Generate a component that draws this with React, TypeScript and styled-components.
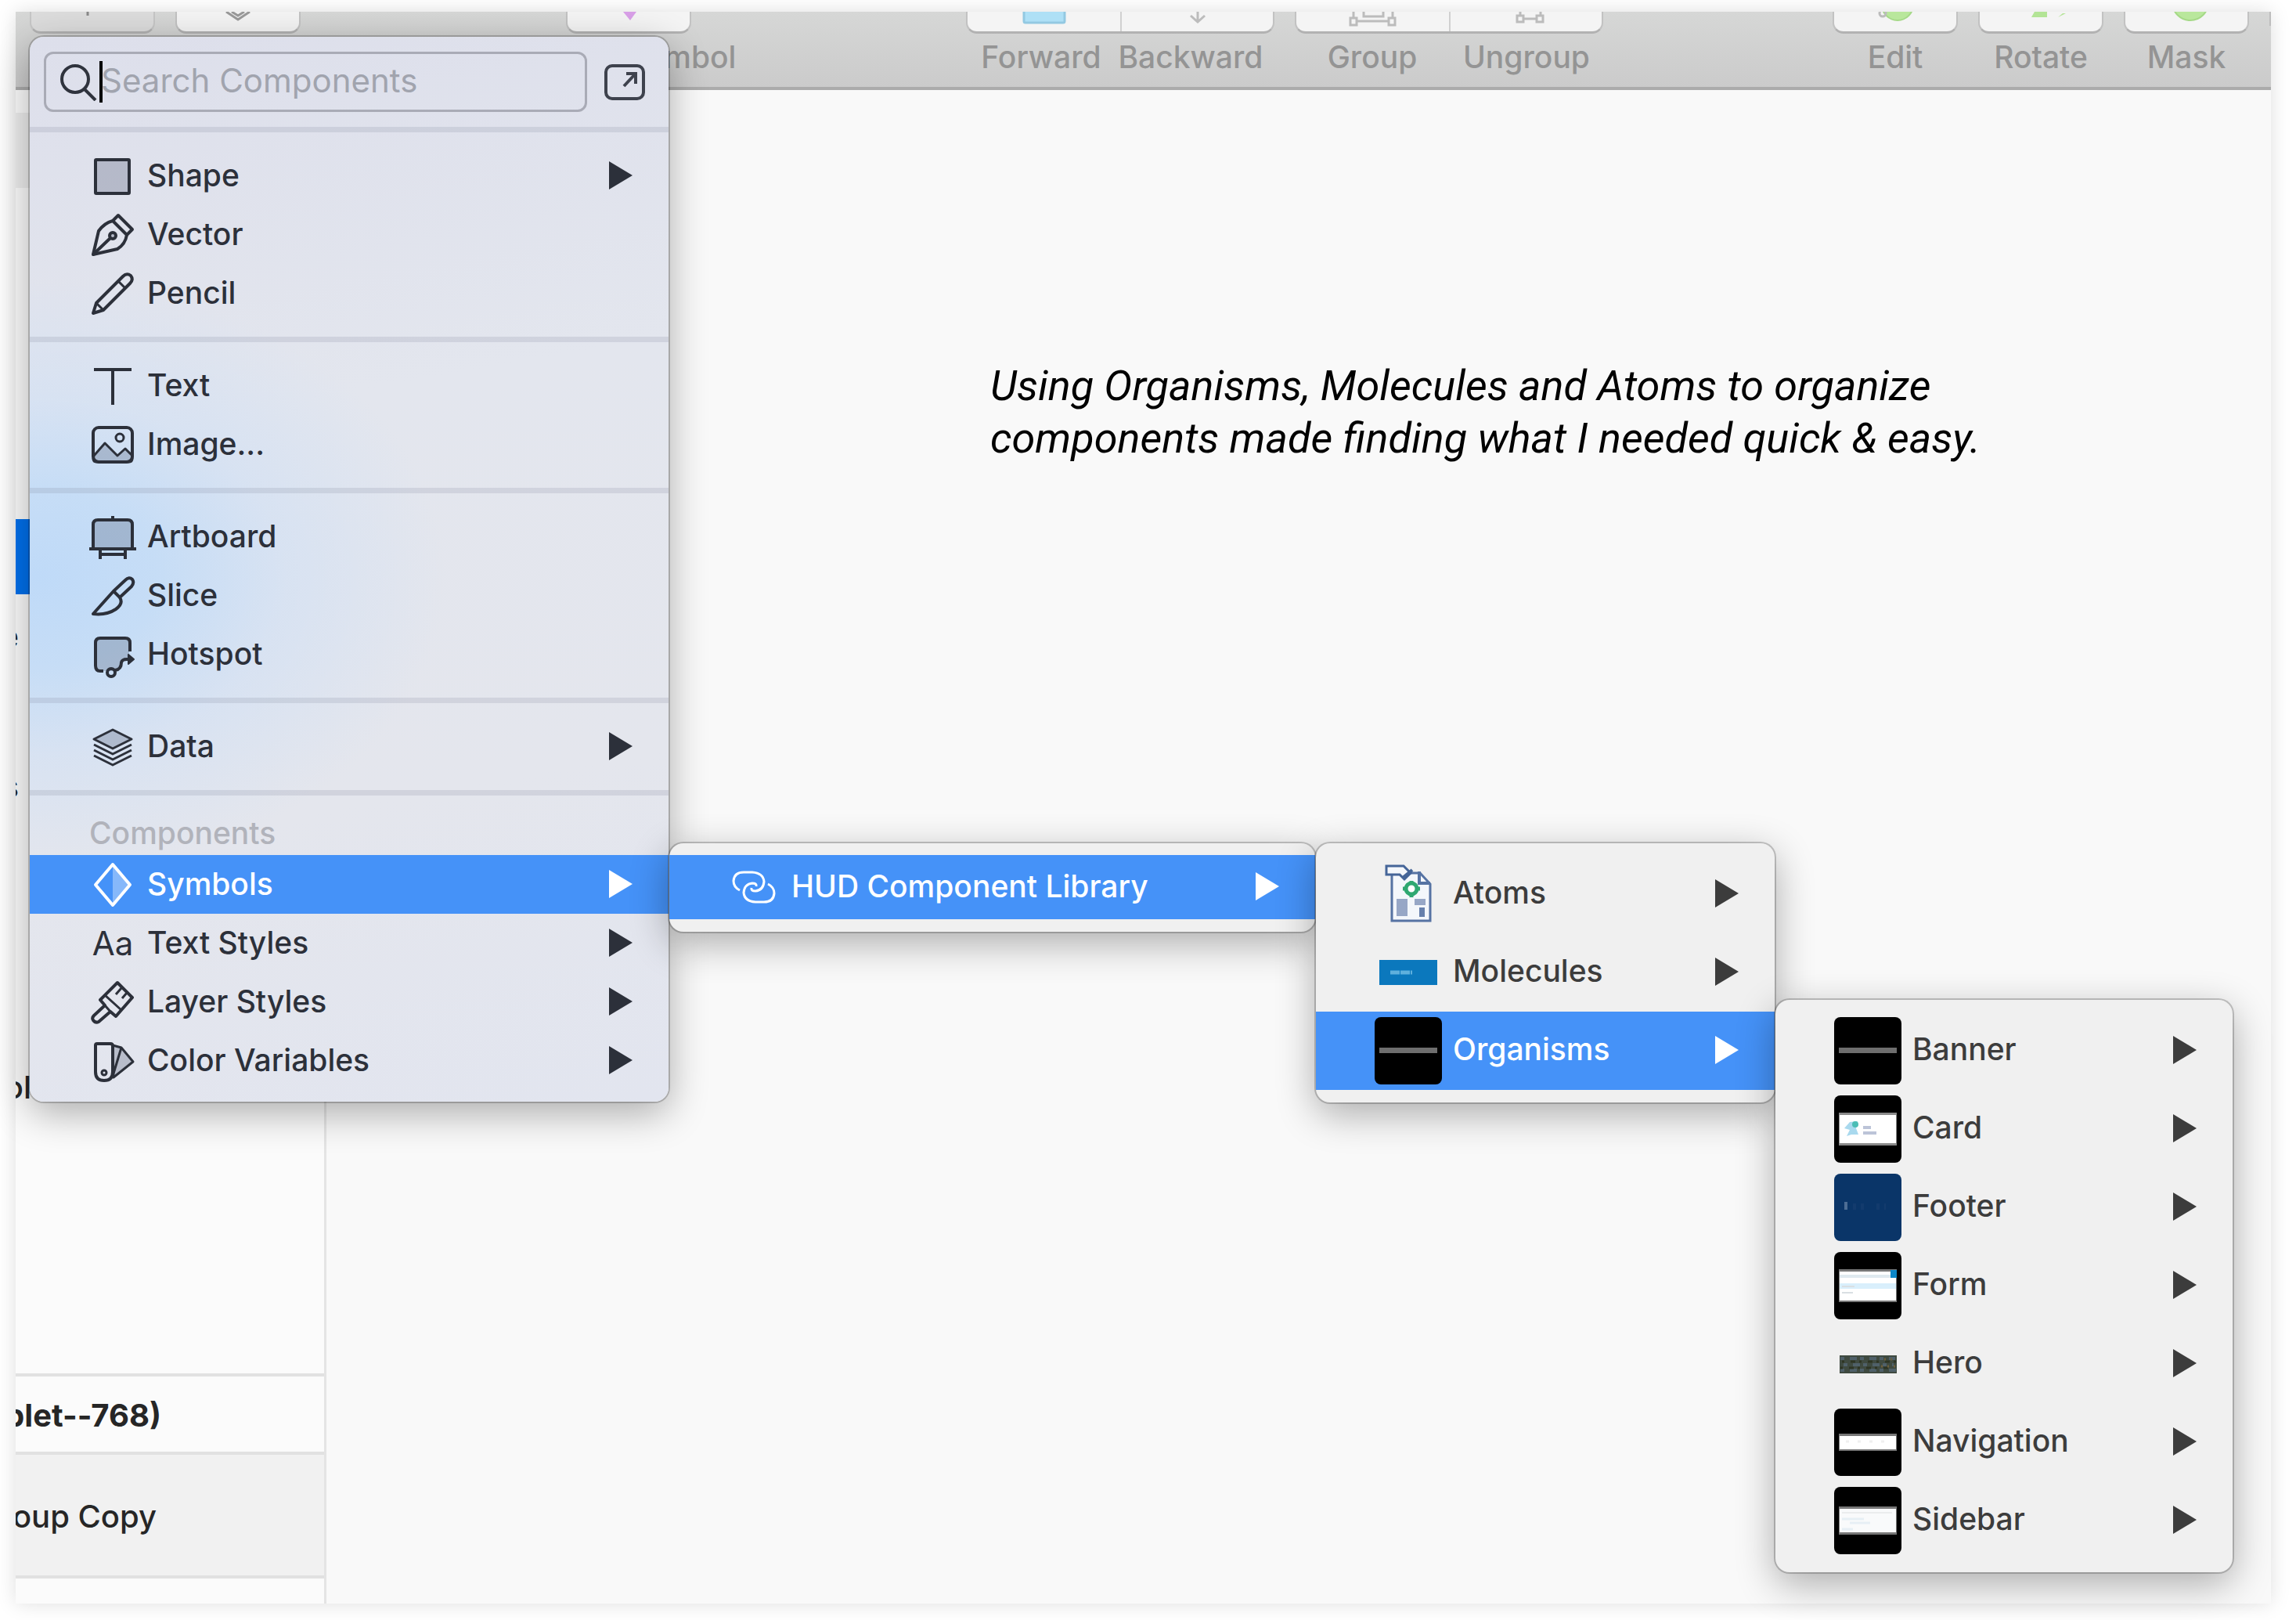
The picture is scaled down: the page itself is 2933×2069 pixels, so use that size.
import React from "react";
import styled, { createGlobalStyle, css } from "styled-components";

const GlobalStyle = createGlobalStyle`
  * { box-sizing: border-box; }
  body {
    margin: 0;
    background: #fff;
    font-family: Inter, "Liberation Sans", sans-serif;
    color: #2c303a;
  }
  button, input { font: inherit; color: inherit; }
`;

/* ---------- page ---------- */

const Page = styled.div`
  min-height: 100vh;
  padding: 15px 32px 21px 20px;
  display: flex;
  overflow: hidden;
`;

const Window = styled.main`
  position: relative;
  flex: 1;
  min-width: 0;
  display: flex;
  flex-direction: column;
  background: #f9f9f9;
  box-shadow: 0 0 24px rgba(0, 0, 0, 0.13);
`;

const Clip = styled.div`
  flex: 1;
  min-width: 0;
  overflow: hidden;
  display: flex;
  flex-direction: column;
`;

/* ---------- toolbar ---------- */

const Toolbar = styled.header`
  display: flex;
  align-items: flex-start;
  height: 100px;
  padding-left: 18px;
  background: linear-gradient(#d6d7d6, #cbcbcb);
  border-bottom: 4px solid #ababab;
`;

const Spacer = styled.div<{ $grow: number }>`
  flex: ${(p) => p.$grow} 1 0;
`;

const Tool = styled.div`
  display: flex;
  flex-direction: column;
  align-items: center;
  margin-right: 26px;
`;

const ToolButtons = styled.div<{ $dim?: boolean }>`
  display: flex;
  height: 28px;
  background: ${(p) => (p.$dim ? "#dcdcdc" : "#f4f4f4")};
  border: 2px solid ${(p) => (p.$dim ? "#c6c6c6" : "#c2c2c2")};
  border-top: 0;
  border-bottom: 3px solid #b2b2b2;
  border-radius: 0 0 14px 14px;
`;

const ToolButton = styled.button<{ $wide?: boolean }>`
  width: ${(p) => (p.$wide ? 195 : 156)}px;
  height: 25px;
  padding: 0;
  border: 0;
  background: none;
  display: flex;
  justify-content: center;
  & + & {
    border-left: 2px solid #d0d0d0;
  }
`;

const ToolLabels = styled.div<{ $inset?: number }>`
  display: flex;
  justify-content: space-around;
  align-self: stretch;
  padding-top: 6px;
  padding-right: ${(p) => p.$inset || 0}px;
  font-size: 39px;
  line-height: 48px;
  font-weight: 500;
  color: #949494;
  white-space: nowrap;
`;

const ToolLabel = styled.span`
  width: 0;
  display: flex;
  justify-content: center;
`;

const ToolEdge = styled.div`
  width: 2px;
  height: 18px;
  background: #bdbdbd;
`;

/* ---------- sidebar ---------- */

const Workspace = styled.div`
  flex: 1;
  display: flex;
`;

const Sidebar = styled.aside`
  width: 397px;
  flex: none;
  display: flex;
  flex-direction: column;
  background: #fbfbfb;
  border-right: 3px solid #e4e4e4;
  font-size: 40px;
  font-weight: 500;
  line-height: 48px;
  color: #262626;
`;

const SideGap = styled.div<{ $h: number; $tint?: boolean }>`
  height: ${(p) => p.$h}px;
  background: ${(p) => (p.$tint ? "#ededed" : "transparent")};
`;

const SideRow = styled.div<{ $active?: boolean }>`
  height: 96px;
  padding-top: 12px;
  display: flex;
  align-items: center;
  background: ${(p) => (p.$active ? "#0070ec" : "transparent")};
`;

const SideSection = styled.div<{ $h: number; $bold?: boolean; $tint?: boolean }>`
  height: ${(p) => p.$h}px;
  padding-top: 4px;
  display: flex;
  align-items: center;
  border-top: 4px solid #e1e1e1;
  background: ${(p) => (p.$tint ? "#f1f1f1" : "transparent")};
  font-weight: ${(p) => (p.$bold ? 700 : 500)};
`;

const TailLabel = styled.span<{ $end: number }>`
  width: ${(p) => p.$end}px;
  display: flex;
  justify-content: flex-end;
  white-space: pre;
`;

const Canvas = styled.section`
  flex: 1;
  min-width: 0;
  padding: 344px 0 0 848px;
`;

const Note = styled.p`
  margin: 0;
  font-family: Roboto, sans-serif;
  font-style: italic;
  font-weight: 400;
  font-size: 54px;
  line-height: 67px;
  color: #000;
  white-space: nowrap;
`;

/* ---------- menus ---------- */

const surface = css`
  border-radius: 18px;
  box-shadow: 0 0 0 2px rgba(0, 0, 0, 0.2), 0 14px 50px rgba(0, 0, 0, 0.32);
`;

const MainMenu = styled.nav`
  ${surface}
  position: absolute;
  left: 18px;
  top: 32px;
  width: 816px;
  padding-bottom: 15px;
  background:
    radial-gradient(ellipse 520px 380px at 10px 690px, #bfdaf8, rgba(195, 220, 247, 0.9) 30%, rgba(208, 224, 245, 0.6) 60%, rgba(227, 230, 238, 0) 100%),
    linear-gradient(170deg, #dddfeb, #e3e6ee 35%, #e4e6ed 70%, #e2e5ef);
`;

const SubMenu = styled.div<{ $w: number }>`
  ${surface}
  position: absolute;
  left: calc(100% + 1px);
  top: -15px;
  width: ${(p) => p.$w}px;
  padding: 15px 0 16px;
  background: #f0f0f0;
  color: #3c3c3c;
`;

const MenuHeader = styled.div`
  display: flex;
  align-items: center;
  gap: 21px;
  padding: 19px 29px 19px 18px;
  height: 115px;
`;

const SearchBox = styled.label`
  flex: 1;
  min-width: 0;
  height: 77px;
  display: flex;
  align-items: center;
  padding-left: 18px;
  border: 3px solid #a9abb6;
  border-radius: 12px;
`;

const Caret = styled.span`
  flex: none;
  width: 4px;
  height: 53px;
  margin-left: 2px;
  background: #000;
`;

const SearchInput = styled.input`
  flex: 1;
  min-width: 0;
  padding: 0 0 4px;
  margin-left: -2px;
  border: 0;
  outline: 0;
  background: none;
  font-size: 42px;
  line-height: 52px;
  &::placeholder {
    color: #a1a4ae;
    opacity: 1;
  }
`;

const ExpandButton = styled.button`
  flex: none;
  width: 54px;
  height: 48px;
  padding: 0;
  border: 0;
  background: none;
  display: flex;
`;

const Group = styled.div<{ $last?: boolean }>`
  border-top: 7px solid rgba(120, 130, 150, 0.18);
  padding: ${(p) => (p.$last ? "0" : "18px 0")};
`;

const GroupTitle = styled.div`
  height: 76px;
  padding: 22px 0 0 76px;
  font-size: 39px;
  font-weight: 500;
  line-height: 52px;
  color: #b1b3bb;
`;

const ItemWrap = styled.div`
  position: relative;
`;

type Kind = "main" | "library" | "thumb";
const metrics: Record<Kind, { h: number; pad: number; slot: number; gap: number; lift: number }> = {
  main: { h: 75, pad: 76, slot: 60, gap: 14, lift: 2 },
  library: { h: 82, pad: 78, slot: 60, gap: 18, lift: 2 },
  thumb: { h: 100, pad: 75, slot: 86, gap: 14, lift: 4 },
};

const ItemButton = styled.button<{ $kind: Kind; $active?: boolean }>`
  width: 100%;
  height: ${(p) => metrics[p.$kind].h}px;
  padding: 0 46px 0 ${(p) => metrics[p.$kind].pad}px;
  display: flex;
  align-items: center;
  gap: ${(p) => metrics[p.$kind].gap}px;
  border: 0;
  text-align: left;
  background: ${(p) => (p.$active ? "#4592f8" : "none")};
  color: ${(p) => (p.$active ? "#fff" : "inherit")};
  font-size: 39px;
  font-weight: 500;
  line-height: 48px;
`;

const Slot = styled.span<{ $kind: Kind }>`
  flex: none;
  width: ${(p) => metrics[p.$kind].slot}px;
  height: ${(p) => metrics[p.$kind].slot}px;
  display: flex;
  align-items: center;
  justify-content: center;
`;

const ItemLabel = styled.span<{ $kind: Kind }>`
  flex: 1;
  padding-bottom: ${(p) => metrics[p.$kind].lift}px;
  white-space: nowrap;
`;

const Arrow = styled.svg`
  flex: none;
  width: 30px;
  height: 36px;
  margin-bottom: 2px;
`;

/* ---------- icons ---------- */

const Line = ({ children, w = 4 }: { children: React.ReactNode; w?: number }) => (
  <svg width="60" height="60" viewBox="0 0 60 60" overflow="visible" fill="none" stroke="currentColor" strokeWidth={w} strokeLinejoin="round" aria-hidden="true">
    {children}
  </svg>
);
const tint = "rgba(60,75,100,0.26)";

const ShapeIcon = () => <Line><rect x="8" y="9" width="43" height="43" fill={tint} rx="1" /></Line>;
const VectorIcon = () => (
  <Line>
    <path d="M5 55 12 25 Q19 15 30 12L48 30Q46 42 36 48Z" />
    <path d="M30 12 37 5 55 23 48 30M5 55 27 34" />
    <circle cx="30" cy="31" r="4" fill={tint} />
  </Line>
);
const PencilIcon = () => (
  <Line>
    <path d="M5 55 9 42 43 8Q48 3 53 7 57 12 52 17L18 51Z" />
    <path d="M37 14 46 23M9 42 18 51" strokeWidth="3" />
  </Line>
);
const TextIcon = () => <Line><path d="M6 9H54M30 9V54" /></Line>;
const ImageIcon = () => (
  <Line>
    <path d="M6 44 20 28 36 44 46 35 55 44V48Q55 52 50 52H10Q5 52 5 48Z" fill={tint} strokeWidth="3" />
    <rect x="5" y="8" width="50" height="44" rx="7" />
    <circle cx="39" cy="21" r="5" strokeWidth="3" />
  </Line>
);
const ArtboardIcon = () => (
  <Line>
    <path d="M5 45V14Q5 8 11 8H49Q55 8 55 14V45Z" fill={tint} />
    <path d="M0 45H60M30 3V8M14 45V58M46 45V58M14 52H46" />
  </Line>
);
const SliceIcon = () => (
  <Line>
    <path d="M5 53 31 24 46 10Q51 5 55 9 58 13 54 18L39 32Q44 40 34 47 22 55 5 53Z" />
    <path d="M31 24 39 32" />
  </Line>
);
const HotspotIcon = () => (
  <Line>
    <path d="M9 9H51V36H44Q41 48 34 51H9Z" fill={tint} stroke="none" />
    <path d="M18 51H14Q8 51 8 44V15Q8 9 14 9H46Q52 9 52 15V26" />
    <circle cx="28" cy="53" r="5" />
    <path d="M33 50Q41 49 41 40 42 36 48 36H55" />
    <path d="M50 30 57 36 50 42Z" fill="currentColor" strokeWidth="2" />
  </Line>
);
const DataIcon = () => (
  <Line w={3}>
    <path d="M30 8 54 20 30 32 6 20Z" fill={tint} />
    <path d="M6 27 30 39 54 27M6 34 30 46 54 34M6 41 30 53 54 41" />
  </Line>
);
const SymbolsIcon = () => (
  <Line>
    <path d="M30 4V56L52 30Z" fill="rgba(255,255,255,0.35)" stroke="none" />
    <path d="M30 4 52 30 30 56 8 30Z" />
  </Line>
);
const LayerStylesIcon = () => (
  <Line>
    <path d="M36 5 55 24 34 48 27 42 12 55Q8 57 5 53 3 50 6 47L20 34 14 27Z" />
    <path d="M20 21 41 40M41 12 34 20M48 18 42 25M20 34 27 42" strokeWidth="3" />
  </Line>
);
const ColorVarsIcon = () => (
  <Line>
    <path d="M30 10 41 13 56 31 31 51Z" fill={tint} strokeWidth="3" />
    <path d="M41 13 31 46" strokeWidth="3" />
    <path d="M8 10Q8 8 10 8H27Q30 8 30 11V44Q30 55 19 55 8 55 8 44Z" />
    <circle cx="19" cy="45" r="3" strokeWidth="3" />
  </Line>
);
const LinkIcon = () => (
  <Line w={3}>
    <path d="M12 34Q4 30 4 22 5 11 17 11H28Q42 12 43 23 42 34 32 35 26 35 27 31" />
    <path d="M48 26Q56 30 56 38 55 49 43 49H32Q18 48 17 37 18 26 28 25 34 25 33 29" />
  </Line>
);

const Thumb = ({ bg, children }: { bg?: string; children?: React.ReactNode }) => (
  <svg width="86" height="86" viewBox="0 0 86 86" aria-hidden="true">
    {bg && <rect width="86" height="86" rx="8" fill={bg} />}
    {children}
  </svg>
);

const BarThumb = () => <Thumb bg="#000"><rect x="6" y="39" width="74" height="7" fill="#6e6e6e" /></Thumb>;
const AtomsThumb = () => (
  <Thumb>
    <path d="M22 16H58L71 30V77H22Z" fill="#f4f7fb" stroke="#5673a3" strokeWidth="3" />
    <path d="M57 14V29H71" fill="none" stroke="#5673a3" strokeWidth="4" />
    <path d="M15 7H37L46 16 38 24 32 18H15Z" fill="#f4f7fb" stroke="#456598" strokeWidth="3" />
    <path d="M36 22 48 12" stroke="#456598" strokeWidth="4" />
    <circle cx="47" cy="36" r="7" fill="#fff" stroke="#2fa871" strokeWidth="5" />
    <path d="M47 26V31M47 42V47M36 36H41M53 36H58" stroke="#2fa871" strokeWidth="5" />
    <rect x="28" y="49" width="14" height="22" fill="#97a7c6" />
    <rect x="51" y="49" width="14" height="8" fill="#97a7c6" />
    <rect x="57" y="60" width="7" height="12" fill="#6780ac" />
  </Thumb>
);
const MoleculesThumb = () => (
  <Thumb>
    <rect x="6" y="27" width="74" height="32" fill="#0b78bd" />
    <path d="M20 43H48" stroke="#5fb0dd" strokeWidth="5" strokeDasharray="12 1" />
  </Thumb>
);
const CardThumb = () => (
  <Thumb bg="#000">
    <rect x="6" y="22" width="74" height="42" fill="#8a8a8a" />
    <rect x="7" y="25" width="72" height="36" fill="#fff" />
    <path d="M13 42 20 34 30 33 28 42 31 50H22L16 52 20 44Z" fill="#a9d9ee" />
    <circle cx="27" cy="37" r="4" fill="#4bbdb5" />
    <path d="M37 41H47M37 48H54" stroke="#bcc4d8" strokeWidth="4" />
  </Thumb>
);
const FooterThumb = () => (
  <Thumb bg="#0a3568">
    <rect x="13" y="36" width="4" height="10" fill="#4c6d94" />
    <path d="M24 42H38M54 42H66" stroke="#133b6d" strokeWidth="8" strokeDasharray="4 6" />
  </Thumb>
);
const FormThumb = () => (
  <Thumb bg="#000">
    <rect x="6" y="22" width="74" height="42" fill="#777" />
    <rect x="7" y="25" width="72" height="37" fill="#fff" />
    <rect x="7" y="29" width="66" height="4" fill="#dfe9ef" />
    <rect x="7" y="40" width="72" height="7" fill="#d9effc" />
    <rect x="72" y="23" width="8" height="10" fill="#0c86c6" />
    <path d="M10 44H26M10 52H24" stroke="#d9dfe3" strokeWidth="2" />
  </Thumb>
);
const HeroThumb = () => (
  <Thumb>
    <rect x="7" y="32" width="73" height="23" fill="#3f4a40" />
    <path d="M8 36H78M12 44H76M8 51H79" stroke="#4f6069" strokeWidth="4" strokeDasharray="5 7 9 4" />
    <path d="M10 40H79M8 48H70" stroke="#2e3524" strokeWidth="3" strokeDasharray="3 8 6 5" />
    <path d="M64 37H78M60 46H78" stroke="#6e5f3c" strokeWidth="3" strokeDasharray="2 6" />
  </Thumb>
);
const NavThumb = () => (
  <Thumb bg="#000">
    <rect x="6" y="32" width="74" height="22" fill="#777" />
    <rect x="7" y="35" width="72" height="17" fill="#fff" />
    <path d="M15 42H66" stroke="#f0f0f0" strokeWidth="3" strokeDasharray="4 11" />
  </Thumb>
);
const SidebarThumb = () => (
  <Thumb bg="#000">
    <rect x="6" y="25" width="74" height="36" fill="#777" />
    <rect x="7" y="28" width="72" height="30" fill="#f9fafb" />
    <path d="M10 33H74" stroke="#ebedee" strokeWidth="2" />
    <path d="M10 41H38M20 46H46M10 54H24" stroke="#e7eff5" strokeWidth="3" />
  </Thumb>
);
const AaGlyph = styled.span`
  font-size: 42px;
  font-weight: 400;
`;

const ToolIcon = ({ children }: { children: React.ReactNode }) => (
  <svg width="80" height="24" viewBox="0 0 80 24" fill="none" stroke="#bcbcbc" strokeWidth="3" aria-hidden="true">
    {children}
  </svg>
);

/* ---------- data ---------- */

type Entry = {
  label: string;
  icon: React.ReactNode;
  arrow?: boolean;
  active?: boolean;
  sub?: React.ReactNode;
};

const Item = ({ kind, e }: { kind: Kind; e: Entry }) => (
  <ItemWrap>
    <ItemButton type="button" role="menuitem" $kind={kind} $active={e.active} aria-haspopup={e.arrow ? "menu" : undefined} aria-expanded={e.sub ? true : undefined}>
      <Slot $kind={kind}>{e.icon}</Slot>
      <ItemLabel $kind={kind}>{e.label}</ItemLabel>
      {e.arrow && (
        <Arrow viewBox="0 0 30 36" aria-hidden="true">
          <path d="M0 0 30 18 0 36Z" fill="currentColor" />
        </Arrow>
      )}
    </ItemButton>
    {e.sub}
  </ItemWrap>
);

const Items = ({ kind, list }: { kind: Kind; list: Entry[] }) => (
  <>
    {list.map((e) => (
      <Item key={e.label} kind={kind} e={e} />
    ))}
  </>
);

const organisms: Entry[] = [
  { label: "Banner", icon: <BarThumb />, arrow: true },
  { label: "Card", icon: <CardThumb />, arrow: true },
  { label: "Footer", icon: <FooterThumb />, arrow: true },
  { label: "Form", icon: <FormThumb />, arrow: true },
  { label: "Hero", icon: <HeroThumb />, arrow: true },
  { label: "Navigation", icon: <NavThumb />, arrow: true },
  { label: "Sidebar", icon: <SidebarThumb />, arrow: true },
];

const levels: Entry[] = [
  { label: "Atoms", icon: <AtomsThumb />, arrow: true },
  { label: "Molecules", icon: <MoleculesThumb />, arrow: true },
  {
    label: "Organisms", icon: <BarThumb />, arrow: true, active: true,
    sub: <SubMenu role="menu" $w={584}><Items kind="thumb" list={organisms} /></SubMenu>,
  },
];

const libraries: Entry[] = [
  {
    label: "HUD Component Library", icon: <LinkIcon />, arrow: true, active: true,
    sub: <SubMenu role="menu" $w={586}><Items kind="thumb" list={levels} /></SubMenu>,
  },
];

const groups: Entry[][] = [
  [
    { label: "Shape", icon: <ShapeIcon />, arrow: true },
    { label: "Vector", icon: <VectorIcon /> },
    { label: "Pencil", icon: <PencilIcon /> },
  ],
  [
    { label: "Text", icon: <TextIcon /> },
    { label: "Image...", icon: <ImageIcon /> },
  ],
  [
    { label: "Artboard", icon: <ArtboardIcon /> },
    { label: "Slice", icon: <SliceIcon /> },
    { label: "Hotspot", icon: <HotspotIcon /> },
  ],
  [{ label: "Data", icon: <DataIcon />, arrow: true }],
];

const components: Entry[] = [
  {
    label: "Symbols", icon: <SymbolsIcon />, arrow: true, active: true,
    sub: <SubMenu role="menu" $w={825}><Items kind="library" list={libraries} /></SubMenu>,
  },
  { label: "Text Styles", icon: <AaGlyph aria-hidden="true">Aa</AaGlyph>, arrow: true },
  { label: "Layer Styles", icon: <LayerStylesIcon />, arrow: true },
  { label: "Color Variables", icon: <ColorVarsIcon />, arrow: true },
];

const SingleTool = ({ label, icon, dim }: { label?: string; icon: React.ReactNode; dim?: boolean }) => (
  <Tool>
    <ToolButtons $dim={dim}>
      <ToolButton type="button" aria-label={label || "Tool"}><ToolIcon>{icon}</ToolIcon></ToolButton>
    </ToolButtons>
    {label && <ToolLabels><ToolLabel>{label}</ToolLabel></ToolLabels>}
  </Tool>
);

const PairTool = ({ labels, icons, inset }: { labels: string[]; icons: React.ReactNode[]; inset?: number }) => (
  <Tool>
    <ToolButtons>
      {labels.map((l, i) => (
        <ToolButton key={l} type="button" $wide aria-label={l}><ToolIcon>{icons[i]}</ToolIcon></ToolButton>
      ))}
    </ToolButtons>
    <ToolLabels $inset={inset}>{labels.map((l) => <ToolLabel key={l}>{l}</ToolLabel>)}</ToolLabels>
  </Tool>
);

export default function App() {
  return (
    <Page>
      <GlobalStyle />
      <Window>
        <Clip>
          <Toolbar>
            <SingleTool dim icon={<path d="M34 0V5" stroke="#8a8a8a" />} />
            <SingleTool icon={<path d="M25 0 40 10 55 0M32 0 40 5 48 0" stroke="#9a9a9a" />} />
            <Spacer $grow={315} />
            <SingleTool label="Create Symbol" icon={<path d="M33 0H50L42 11Z" fill="#d9a0e8" stroke="none" />} />
            <Spacer $grow={327} />
            <PairTool
              inset={12}
              labels={["Forward", "Backward"]}
              icons={[
                <rect x="14" y="-10" width="52" height="24" rx="2" fill="#aee0f6" stroke="#93c9e2" />,
                <path d="M40 0V13M31 5 40 13 49 5" />,
              ]}
            />
            <PairTool
              labels={["Group", "Ungroup"]}
              icons={[
                <path d="M15 0V8M65 0V8M28 0V6H53V0M19 12H60M11 8H19V17H11ZM60 8H68V17H60Z" />,
                <path d="M32 0V5M58 0V5M36 9H53M28 5H36V13H28ZM53 5H61V13H53Z" />,
              ]}
            />
            <Spacer $grow={268} />
            <SingleTool label="Edit" icon={<><circle cx="43" cy="-9" r="20" fill="#b9e79c" stroke="#a5d987" strokeWidth="2" /><circle cx="24" cy="2" r="4" /></>} />
            <SingleTool label="Rotate" icon={<path d="M32 0H48V7H28ZM62 7 68 2H72Z" fill="#b3e496" stroke="none" />} />
            <SingleTool label="Mask" icon={<circle cx="45" cy="-12" r="23" fill="#b9e79c" stroke="#a5d987" strokeWidth="2" />} />
            <ToolEdge />
          </Toolbar>
          <Workspace>
            <Sidebar>
              <SideGap $h={29} />
              <SideGap $h={96} $tint />
              <SideGap $h={423} />
              <SideRow $active />
              <SideRow><TailLabel $end={4}>e</TailLabel></SideRow>
              <SideRow />
              <SideRow><TailLabel $end={4}>s</TailLabel></SideRow>
              <SideRow />
              <SideRow />
              <SideRow />
              <SideRow><TailLabel $end={20}>ol</TailLabel></SideRow>
              <SideGap $h={323} />
              <SideSection $h={100} $bold><TailLabel $end={186}>blet--768)</TailLabel></SideSection>
              <SideSection $h={158} $tint><TailLabel $end={180}>oup Copy</TailLabel></SideSection>
              <SideSection $h={36} />
            </Sidebar>
            <Canvas>
              <Note>
                Using Organisms, Molecules and Atoms to organize
                <br />
                components made finding what I needed quick &amp; easy.
              </Note>
            </Canvas>
          </Workspace>
        </Clip>

        <MainMenu aria-label="Insert">
          <MenuHeader>
            <SearchBox>
              <svg width="48" height="48" viewBox="0 0 48 48" fill="none" stroke="#2f333d" strokeWidth="4" aria-hidden="true">
                <circle cx="19" cy="20" r="17" />
                <path d="M31 33 45 47" />
              </svg>
              <Caret />
              <SearchInput type="text" placeholder="Search Components" aria-label="Search Components" />
            </SearchBox>
            <ExpandButton type="button" aria-label="Open in window">
              <svg width="54" height="48" viewBox="0 0 54 48" fill="none" stroke="#3e424d" strokeWidth="4" aria-hidden="true">
                <rect x="3" y="3" width="48" height="42" rx="8" />
                <path d="M26 29 40 14M29 13H41V26" strokeWidth="4" />
              </svg>
            </ExpandButton>
          </MenuHeader>
          {groups.map((g) => (
            <Group key={g[0].label}><Items kind="main" list={g} /></Group>
          ))}
          <Group $last>
            <GroupTitle>Components</GroupTitle>
            <Items kind="main" list={components} />
          </Group>
        </MainMenu>
      </Window>
    </Page>
  );
}
